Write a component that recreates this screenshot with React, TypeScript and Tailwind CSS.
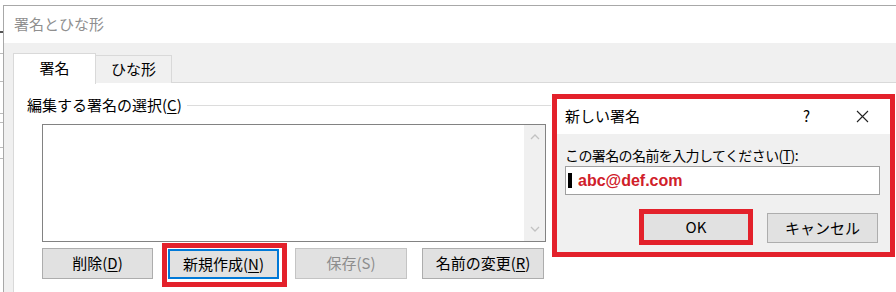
const jp = "font-['Noto_Sans_CJK_JP',sans-serif]";

function Btn({
  children,
  className = "",
  tone = "normal",
}: {
  children: React.ReactNode;
  className?: string;
  tone?: "normal" | "focus" | "disabled";
}) {
  const look =
    tone === "focus"
      ? "border-2 border-[#0078d7] text-black"
      : tone === "disabled"
      ? "border border-[#c4c4c4] text-[#8d8d8d]"
      : "border border-[#adadad] text-black";
  return (
    <div className={`flex items-center justify-center bg-[#e1e1e1] text-[15px] ${look} ${className}`}>
      {children}
    </div>
  );
}

function Chevron({ up }: { up?: boolean }) {
  return (
    <svg width="10" height="6" viewBox="0 0 10 6">
      <path
        d={up ? "M1 5 L5 1 L9 5" : "M1 1 L5 5 L9 1"}
        fill="none"
        stroke="#c2c2c2"
        strokeWidth="1.3"
      />
    </svg>
  );
}

export default function App() {
  return (
    <div className={`relative w-[896px] h-[292px] overflow-hidden bg-white flex ${jp}`}>
      {/* stuff behind the window */}
      <div className="w-[3px] flex flex-col shrink-0">
        <div className="h-[31px]" />
        <div className="h-[2px] bg-[#555]" />
        <div className="h-[20px]" />
        <div className="h-px bg-[#bbb]" />
        <div className="h-[27px]" />
        <div className="h-px bg-[#bbb]" />
        <div className="h-[31px]" />
        <div className="h-px bg-[#bbb]" />
        <div className="h-[8px]" />
        <div className="h-px bg-[#bbb]" />
        <div className="h-[24px]" />
        <div className="h-px bg-[#bbb]" />
        <div className="h-[10px]" />
        <div className="h-px bg-[#bbb]" />
      </div>

      {/* main window */}
      <div className="flex-1 flex flex-col mt-[5px] border-l border-t border-[#a8a8a8]">
        <div className="h-[37px] bg-white flex items-center pl-[10px] text-[15px] text-[#8f8f8f]">
          署名とひな形
        </div>
        <div className="flex-1 flex flex-col bg-[#f0f0f0] pl-[9px]">
          {/* tabs */}
          <div className="flex items-end h-[40px] relative">
            <div className="w-[83px] h-[31px] bg-white border-l border-t border-r border-[#d9d9d9] flex items-center justify-center text-[15px] text-black relative z-10 -mb-px pb-[2px]">
              署名
            </div>
            <div className="w-[76px] h-[28px] border-t border-r border-[#d9d9d9] flex items-center justify-center text-[15px] text-black">
              ひな形
            </div>
            <div className="flex-1 h-px bg-[#d9d9d9]" />
          </div>

          {/* tab panel */}
          <div className="flex-1 bg-white border-l border-[#d9d9d9] flex flex-col pl-[13px]">
            <div className="flex items-center h-[20px] mt-[12px]">
              <span className="text-[15px] text-black whitespace-nowrap">
                編集する署名の選択(<span className="underline underline-offset-2">C</span>)
              </span>
              <div className="w-[364px] h-px bg-[#dcdcdc] ml-[5px]" />
            </div>
            <div className="ml-[15px] mt-[9px] w-[504px] h-[118px] border border-[#828282] flex justify-end">
              <div className="w-[21px] bg-[#f0f0f0] flex flex-col items-center justify-between py-[9px]">
                <Chevron up />
                <Chevron />
              </div>
            </div>
            <div className="flex items-start ml-[15px] mt-px">
              <Btn className="w-[111px] h-[31px] mt-[5px]">
                削除(<span className="underline underline-offset-2">D</span>)
              </Btn>
              <div className="ml-[9px] w-[125px] h-[44px] border-[5px] border-[#e3212b] pl-px pt-px">
                <Btn tone="focus" className="w-[111px] h-[30px]">
                  新規作成(<span className="underline underline-offset-2">N</span>)
                </Btn>
              </div>
              <Btn tone="disabled" className="ml-[8px] w-[112px] h-[31px] mt-[5px]">
                保存(S)
              </Btn>
              <Btn className="ml-[15px] w-[122px] h-[31px] mt-[5px]">
                名前の変更(<span className="underline underline-offset-2">R</span>)
              </Btn>
            </div>
          </div>
        </div>
      </div>

      {/* new signature dialog, floating window */}
      <div className="absolute left-[552px] top-[94px] w-[343px] h-[163px] border-[5px] border-[#e3212b] flex flex-col">
        <div className="h-[35px] bg-white flex items-center pl-[8px] text-[15px] text-black">
          <span className="flex-1">新しい署名</span>
          <span className="text-[15px] mr-[46px]">?</span>
          <svg width="13" height="13" viewBox="0 0 13 13" className="mr-[21px]">
            <path d="M1 1 L12 12 M12 1 L1 12" stroke="#222" strokeWidth="1.1" />
          </svg>
        </div>
        <div className="flex-1 bg-[#f0f0f0] flex flex-col pl-[8px]">
          <div className="mt-[11px] h-[20px] flex items-center text-[14px] text-black whitespace-nowrap tracking-[-0.6px]">
            この署名の名前を入力してください(<span className="underline underline-offset-2">T</span>):
          </div>
          <div className="mt-px w-[315px] h-[29px] bg-white border border-[#a0a0a0] flex items-center pl-[2px]">
            <div className="w-[4px] h-[15px] bg-black" />
            <span className="ml-[6px] font-['Liberation_Sans',sans-serif] font-bold text-[16px] text-[#d0202a]">
              abc@def.com
            </span>
          </div>
          <div className="flex items-start mt-[14px] ml-[74px]">
            <div className="w-[114px] h-[36px] border-[5px] border-[#e3212b] flex items-center justify-center bg-[#e1e1e1] text-[15px] text-black">
              OK
            </div>
            <Btn className="ml-[14px] mt-[4px] w-[111px] h-[30px]">キャンセル</Btn>
          </div>
        </div>
      </div>
    </div>
  );
}
